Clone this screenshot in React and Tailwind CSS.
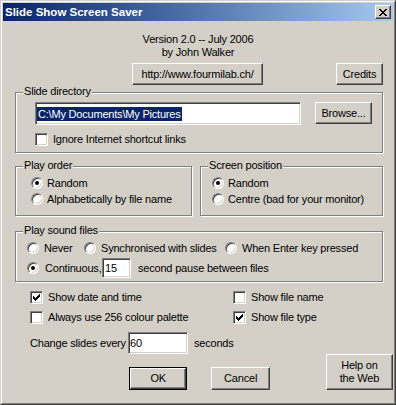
import React from "react";

function Btn({ className = "", children }) {
  return (
    <div
      className={`flex items-center justify-center bg-[#d4d0c8] border border-t-white border-l-white border-r-[#404040] border-b-[#404040] shadow-[inset_-1px_-1px_0_#808080] ${className}`}
    >
      {children}
    </div>
  );
}

const sunken =
  "border border-t-[#808080] border-l-[#808080] border-r-white border-b-white shadow-[inset_1px_1px_0_#404040,inset_-1px_-1px_0_#d4d0c8] bg-white";

function Check({ on }) {
  return (
    <div className={`w-[13px] h-[13px] shrink-0 flex items-center justify-center ${sunken}`}>
      {on && (
        <svg width="7" height="7" viewBox="0 0 7 7" shapeRendering="crispEdges">
          <rect x="0" y="2" width="1" height="3" fill="#000" />
          <rect x="1" y="3" width="1" height="3" fill="#000" />
          <rect x="2" y="4" width="1" height="3" fill="#000" />
          <rect x="3" y="3" width="1" height="3" fill="#000" />
          <rect x="4" y="2" width="1" height="3" fill="#000" />
          <rect x="5" y="1" width="1" height="3" fill="#000" />
          <rect x="6" y="0" width="1" height="3" fill="#000" />
        </svg>
      )}
    </div>
  );
}

function Radio({ on }) {
  return (
    <div className={`w-[12px] h-[12px] shrink-0 rounded-full flex items-center justify-center ${sunken}`}>
      {on && <div className="w-[4px] h-[4px] rounded-full bg-black" />}
    </div>
  );
}

function Group({ label, className = "", children }) {
  return (
    <div
      className={`relative border border-[#808080] shadow-[1px_1px_0_#fff,inset_1px_1px_0_#fff] ${className}`}
    >
      <span className="absolute left-[7px] top-[-8px] bg-[#d4d0c8] px-[1px] leading-[13px]">
        {label}
      </span>
      {children}
    </div>
  );
}

export default function App() {
  return (
    <div className="w-[396px] h-[405px] bg-[#d4d0c8] border border-t-[#d4d0c8] border-l-[#d4d0c8] border-r-[#404040] border-b-[#404040] font-['Liberation_Sans',Arial,sans-serif] text-[11px] leading-[13px] tracking-[-0.2px] text-black">
      <div className="h-full border border-t-white border-l-white border-r-[#808080] border-b-[#808080] p-[1px] flex flex-col">
        {/* title bar */}
        <div className="h-[18px] shrink-0 flex items-center justify-between pl-[2px] pr-[2px] bg-linear-to-r from-[#0a246a] to-[#a6caf0]">
          <span className="text-white font-bold text-[11.5px] tracking-normal">Slide Show Screen Saver</span>
          <Btn className="w-[16px] h-[14px]">
            <svg width="8" height="7" viewBox="0 0 8 7" shapeRendering="crispEdges">
              <path
                d="M0 0h2v1h-2zM6 0h2v1h-2zM1 1h2v1h-2zM5 1h2v1h-2zM2 2h4v1h-4zM3 3h2v1h-2zM2 4h4v1h-4zM1 5h2v1h-2zM5 5h2v1h-2zM0 6h2v1h-2zM6 6h2v1h-2z"
                fill="#000"
              />
            </svg>
          </Btn>
        </div>

        <div className="mt-[12px] text-center">
          <div>Version 2.0 -- July 2006</div>
          <div>by John Walker</div>
        </div>

        <div className="flex mt-[4px] pl-[129px]">
          <Btn className="w-[131px] h-[22px]">http://www.fourmilab.ch/</Btn>
          <Btn className="ml-[73px] w-[47px] h-[22px]">Credits</Btn>
        </div>

        <div className="pl-[12px]">
          <Group label="Slide directory" className="mt-[7px] w-[368px] h-[61px] pt-[9px] pl-[19px]">
            <div className="flex items-start">
              <div className={`w-[266px] h-[23px] flex items-center pl-[1px] ${sunken}`}>
                <span className="bg-[#0a246a] text-white leading-[14px] px-[1px]">
                  C:\My Documents\My Pictures
                </span>
              </div>
              <Btn className="ml-[14px] w-[57px] h-[22px]">Browse...</Btn>
            </div>
            <div className="mt-[8px] flex items-center gap-[5px]">
              <Check />
              <span>Ignore Internet shortcut links</span>
            </div>
          </Group>

          <div className="mt-[13px] flex gap-[8px]">
            <Group label="Play order" className="w-[177px] h-[50px] pt-[10px] pl-[15px]">
              <div className="flex items-center gap-[4px] h-[12px]">
                <Radio on />
                <span>Random</span>
              </div>
              <div className="mt-[4px] flex items-center gap-[4px] h-[12px]">
                <Radio />
                <span>Alphabetically by file name</span>
              </div>
            </Group>
            <Group label="Screen position" className="w-[183px] h-[50px] pt-[10px] pl-[11px]">
              <div className="flex items-center gap-[4px] h-[12px]">
                <Radio on />
                <span>Random</span>
              </div>
              <div className="mt-[4px] flex items-center gap-[4px] h-[12px]">
                <Radio />
                <span>Centre (bad for your monitor)</span>
              </div>
            </Group>
          </div>

          <Group label="Play sound files" className="mt-[15px] w-[368px] h-[51px] pt-[10px] pl-[11px]">
            <div className="flex items-center h-[12px]">
              <div className="w-[57px] flex items-center gap-[5px]">
                <Radio />
                <span>Never</span>
              </div>
              <div className="w-[141px] flex items-center gap-[5px]">
                <Radio />
                <span>Synchronised with slides</span>
              </div>
              <div className="flex items-center gap-[5px]">
                <Radio />
                <span>When Enter key pressed</span>
              </div>
            </div>
            <div className="mt-[4px] flex items-center h-[20px]">
              <Radio on />
              <span className="ml-[6px] w-[57px]">Continuous,</span>
              <div className={`w-[29px] h-[20px] flex items-center pl-[2px] ${sunken}`}>15</div>
              <span className="ml-[7px]">second pause between files</span>
            </div>
          </Group>

          <div className="mt-[9px] pl-[15px]">
            <div className="flex">
              <div className="w-[203px] flex items-center gap-[5px]">
                <Check on />
                <span>Show date and time</span>
              </div>
              <div className="flex items-center gap-[5px]">
                <Check />
                <span>Show file name</span>
              </div>
            </div>
            <div className="mt-[7px] flex">
              <div className="w-[203px] flex items-center gap-[5px]">
                <Check />
                <span>Always use 256 colour palette</span>
              </div>
              <div className="flex items-center gap-[5px]">
                <Check on />
                <span>Show file type</span>
              </div>
            </div>

            <div className="mt-[8px] flex items-center h-[22px]">
              <span className="w-[98px]">Change slides every</span>
              <div className={`w-[60px] h-[22px] flex items-center pl-[1px] ${sunken}`}>60</div>
              <span className="ml-[6px]">seconds</span>
            </div>

            <div className="flex items-end h-[36px]">
              <div className="ml-[99px] w-[60px] h-[23px] border border-black">
                <Btn className="w-full h-full">OK</Btn>
              </div>
              <Btn className="ml-[24px] w-[60px] h-[23px]">Cancel</Btn>
              <Btn className="ml-[56px] w-[69px] h-[36px] text-center leading-[13px]">
                Help on
                <br />
                the Web
              </Btn>
            </div>
          </div>
        </div>
      </div>
    </div>
  );
}
